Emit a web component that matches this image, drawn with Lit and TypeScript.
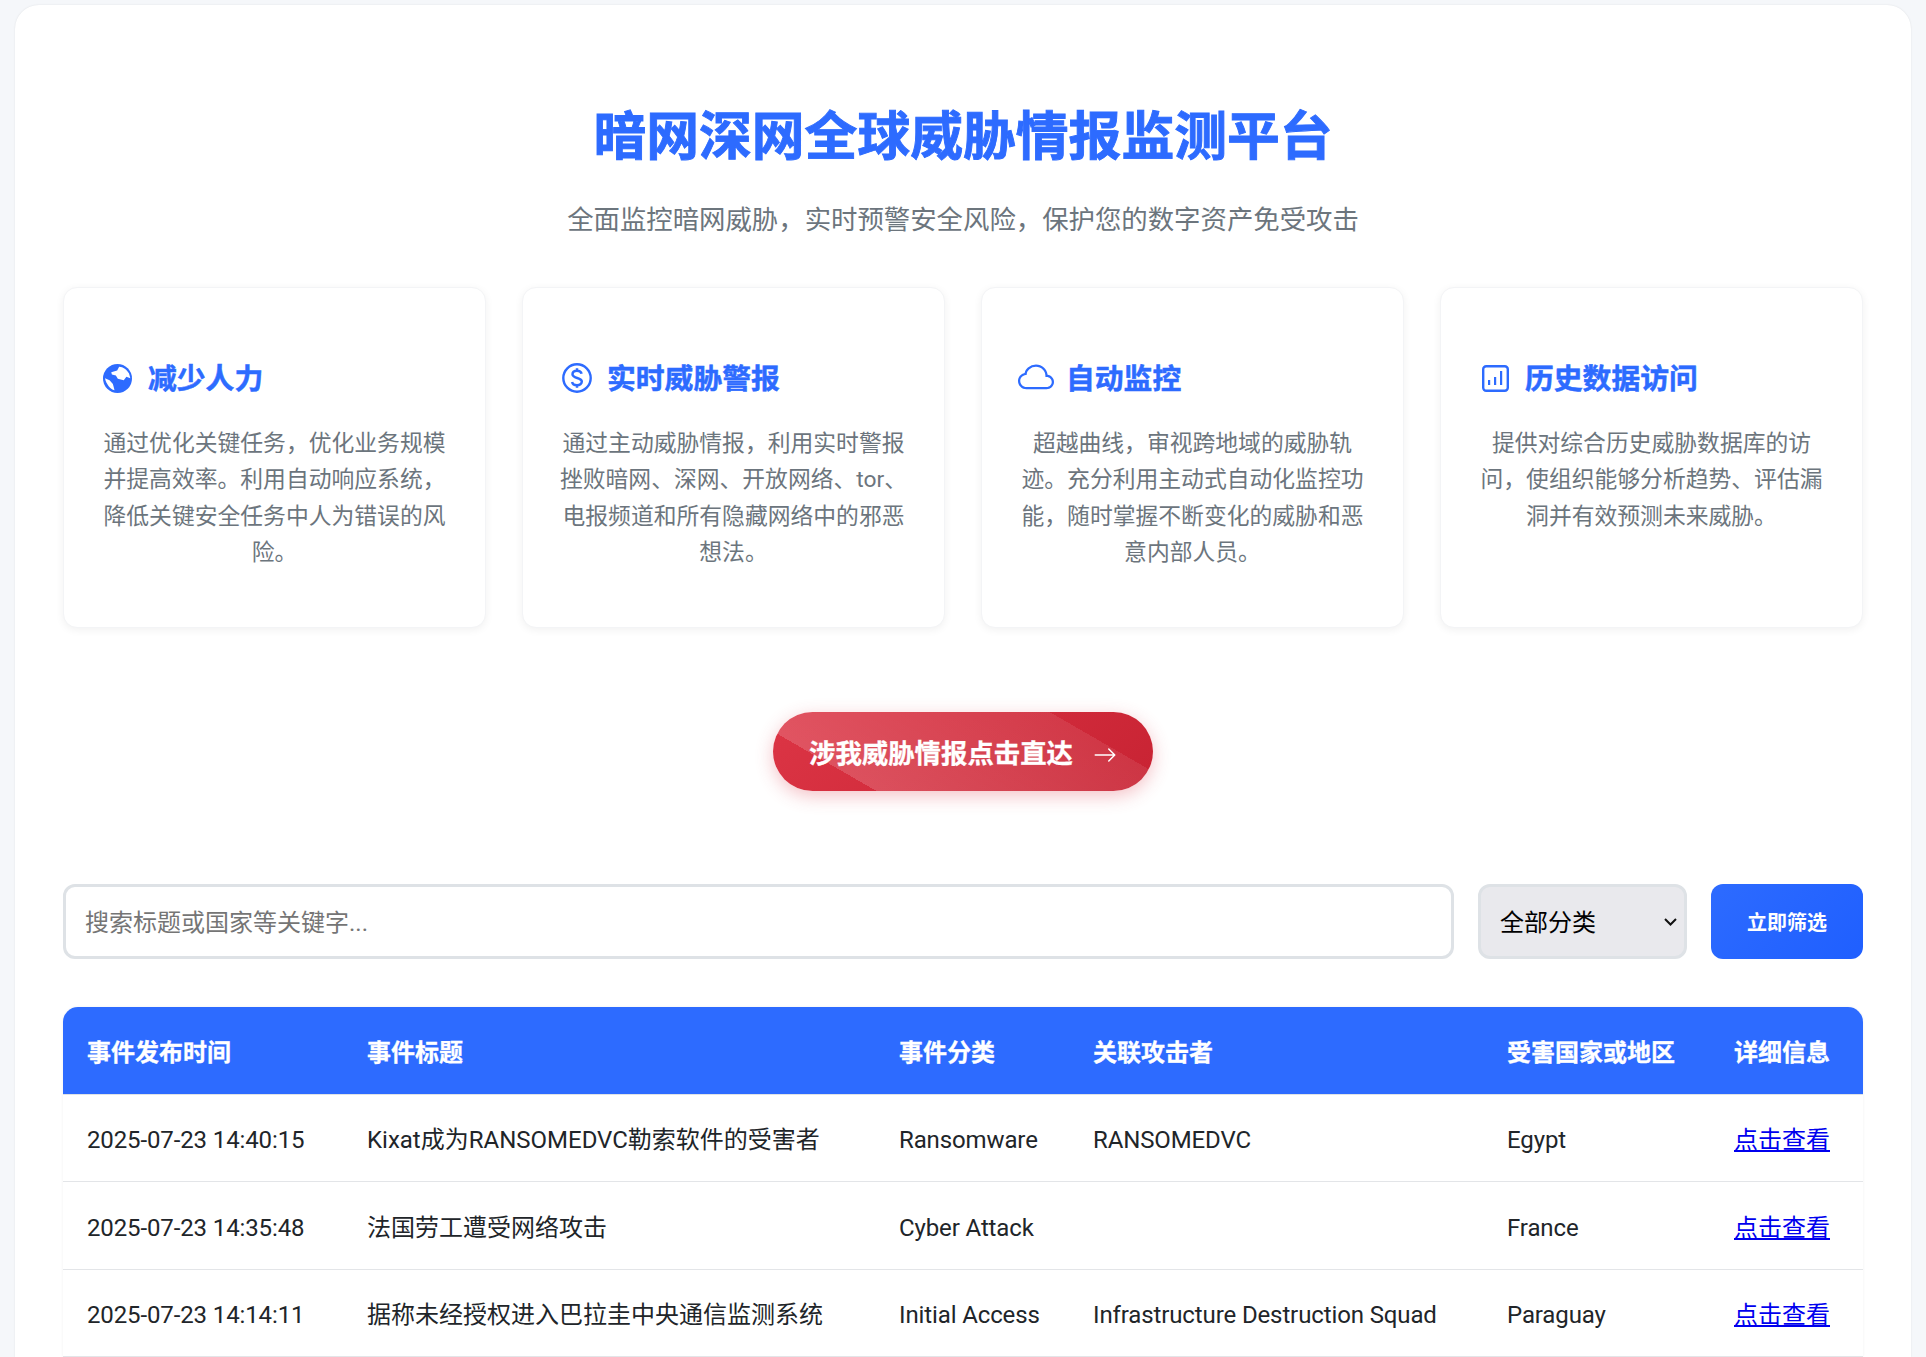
import { LitElement, html, css, svg } from "lit";
import { customElement } from "lit/decorators.js";

const features = [
  { key: "globe", title: "减少人力", text: "通过优化关键任务，优化业务规模并提高效率。利用自动响应系统，降低关键安全任务中人为错误的风险。" },
  { key: "dollar", title: "实时威胁警报", text: "通过主动威胁情报，利用实时警报挫败暗网、深网、开放网络、tor、电报频道和所有隐藏网络中的邪恶想法。" },
  { key: "cloud", title: "自动监控", text: "超越曲线，审视跨地域的威胁轨迹。充分利用主动式自动化监控功能，随时掌握不断变化的威胁和恶意内部人员。" },
  { key: "chart", title: "历史数据访问", text: "提供对综合历史威胁数据库的访问，使组织能够分析趋势、评估漏洞并有效预测未来威胁。" },
];

const rows = [
  ["2025-07-23 14:40:15", "Kixat成为RANSOMEDVC勒索软件的受害者", "Ransomware", "RANSOMEDVC", "Egypt"],
  ["2025-07-23 14:35:48", "法国劳工遭受网络攻击", "Cyber Attack", "", "France"],
  ["2025-07-23 14:14:11", "据称未经授权进入巴拉圭中央通信监测系统", "Initial Access", "Infrastructure Destruction Squad", "Paraguay"],
];

const icons: Record<string, unknown> = {
  globe: svg`<svg class="icon globe" viewBox="15 11 88 88"><circle cx="59" cy="55" r="44" fill="currentColor"/><path fill="#fff" d="M40 36 L58 31 L64 19 C76 19 88 28 94 40 L98 54 L86 50 L78 60 L60 56 L54 46 L42 43 Z"/><path fill="#fff" d="M21 54 L35 60 L45 72 L50 91 C36 87 25 72 21 54 Z"/></svg>`,
  dollar: svg`<svg class="icon dollar" viewBox="0 0 30 30" fill="none" stroke="currentColor"><circle cx="15" cy="15" r="13.7" stroke-width="2.4"/><path stroke-width="2.5" d="M19.6 10.8c-.5-1.9-2.2-3-4.6-3-2.6 0-4.5 1.4-4.5 3.5 0 4.7 9.3 2.6 9.3 7.3 0 2.1-2 3.6-4.8 3.6-2.7 0-4.5-1.2-4.9-3.2M15 5.2v2.6M15 22.2v2.6"/></svg>`,
  cloud: svg`<svg class="icon cloud" viewBox="0 0 16 16" fill="currentColor"><path d="M4.406 3.342A5.53 5.53 0 0 1 8 2c2.69 0 4.923 2 5.166 4.579C14.758 6.804 16 8.137 16 9.773 16 11.569 14.502 13 12.687 13H3.781C1.708 13 0 11.366 0 9.318c0-1.763 1.266-3.223 2.942-3.593.143-.863.698-1.723 1.464-2.383m.653.757c-.757.653-1.153 1.44-1.153 2.056v.448l-.445.049C2.064 6.805 1 7.952 1 9.318 1 10.785 2.23 12 3.781 12h8.906C13.98 12 15 10.988 15 9.773c0-1.216-1.02-2.228-2.313-2.228h-.5v-.5C12.188 4.825 10.328 3 8 3a4.53 4.53 0 0 0-2.941 1.1z"/></svg>`,
  chart: svg`<svg class="icon chart" viewBox="0 0 27 27" fill="currentColor"><rect x="1.2" y="1.2" width="24.6" height="24.6" rx="3" fill="none" stroke="currentColor" stroke-width="2.4"/><rect x="6" y="15" width="2.2" height="5"/><rect x="12" y="12" width="2.2" height="8"/><rect x="18" y="6" width="2.2" height="14"/></svg>`,
};

@customElement("app-root")
export class AppRoot extends LitElement {
  static styles = css`
    :host {
      display: block;
      height: 100vh;
      overflow: hidden;
      background: #f5f7fa;
      font-family: "Roboto", "Noto Sans CJK SC", sans-serif;
      color: #212529;
    }
    .container {
      margin: 5px 15px 0;
      padding: 96px 48px 0;
      background: #fff;
      border-radius: 24px 24px 0 0;
      box-shadow: 0 0 2px rgba(0, 0, 0, 0.1);
      min-height: 1352px;
      box-sizing: border-box;
    }
    h1 {
      margin: 0;
      font-size: 52.8px;
      line-height: 72px;
      font-weight: 700;
      text-align: center;
      color: #2d6bff;
      -webkit-text-stroke: 0.9px #2d6bff;
    }
    .sub {
      margin: 26px 0 0;
      font-size: 26.4px;
      line-height: 42px;
      text-align: center;
      color: #6c757d;
    }
    .cards {
      display: grid;
      grid-template-columns: repeat(4, 1fr);
      gap: 36px;
      margin-top: 46px;
    }
    .card {
      box-sizing: border-box;
      padding: 73px 39px 55px;
      border: 1px solid #f3f4f6;
      border-radius: 14px;
      box-shadow: 0 2px 8px rgba(0, 0, 0, 0.06);
      background: #fff;
    }
    .card-head {
      display: flex;
      align-items: center;
      height: 36px;
      color: #2d6bff;
    }
    .card-head h3 {
      margin: 0;
      font-size: 28.8px;
      line-height: 36px;
      font-weight: 700;
      -webkit-text-stroke: 0.5px #2d6bff;
    }
    .icon { flex: none; display: block; margin-top: -2px; }
    .globe { width: 29px; height: 29px; margin-right: 16px; }
    .dollar { width: 30px; height: 30px; margin-right: 15px; }
    .cloud { width: 36px; height: 36px; margin-left: -3px; margin-right: 12px; }
    .chart { width: 27px; height: 27px; margin-left: 2px; margin-right: 16px; }
    .card p {
      margin: 29px -6px 0;
      font-size: 22.8px;
      line-height: 36.48px;
      text-align: center;
      color: #6c757d;
    }
    .cta-row {
      display: flex;
      justify-content: center;
      margin-top: 84px;
    }
    .cta {
      display: inline-flex;
      align-items: center;
      height: 79px;
      box-sizing: border-box;
      padding: 0 38px 0 36px;
      gap: 22px;
      border: 0;
      border-radius: 40px;
      color: #fff;
      font: 700 26.4px "Roboto", "Noto Sans CJK SC", sans-serif;
      -webkit-text-stroke: 0.3px #fff;
      background:
        linear-gradient(30deg, transparent 20%, rgba(255, 255, 255, 0.16) 20%, rgba(255, 255, 255, 0.08) 80%, transparent 80%),
        linear-gradient(135deg, #dc3545, #c82333);
      box-shadow: 0 5px 18px rgba(220, 53, 69, 0.3);
    }
    .cta svg { width: 24px; height: 24px; margin: 7px -2px 0; }
    .filters {
      display: flex;
      gap: 24px;
      margin-top: 93px;
      height: 75px;
    }
    .search {
      flex: 1;
      min-width: 0;
      box-sizing: border-box;
      padding: 4px 19px 0;
      border: 3px solid #dee2e6;
      border-radius: 12px;
      font: 24px "Roboto", "Noto Sans CJK SC", sans-serif;
      background: #fff;
      outline: none;
    }
    .search::placeholder { color: #757575; opacity: 1; }
    .select-wrap {
      position: relative;
      width: 209px;
      flex: none;
    }
    .select {
      appearance: none;
      width: 100%;
      height: 100%;
      box-sizing: border-box;
      padding: 4px 19px 0;
      border: 3px solid #dee2e6;
      border-radius: 12px;
      background-color: #e9e9ed;
      color: #000;
      font: 24px "Roboto", "Noto Sans CJK SC", sans-serif;
    }
    .chev {
      position: absolute;
      right: 10px;
      top: 34px;
      width: 13px;
      height: 8px;
      pointer-events: none;
    }
    .go {
      width: 152px;
      flex: none;
      border: 0;
      border-radius: 12px;
      color: #fff;
      font: 700 20px "Roboto", "Noto Sans CJK SC", sans-serif;
      background: linear-gradient(135deg, #2d6bff, #1f5fff);
    }
    .table-wrap {
      margin-top: 48px;
      border-radius: 15px 15px 0 0;
      overflow: hidden;
      box-shadow: 0 0 3px rgba(0, 0, 0, 0.06);
    }
    table {
      width: 100%;
      table-layout: fixed;
      border-collapse: separate;
      border-spacing: 0;
      font-size: 24px;
      line-height: 30px;
    }
    .c1 { width: 280px; }
    .c2 { width: 532px; }
    .c3 { width: 194px; }
    .c4 { width: 414px; }
    .c5 { width: 227px; }
    .c6 { width: 153px; }
    th {
      height: 88px;
      box-sizing: border-box;
      padding: 5px 24px 0;
      text-align: left;
      font-weight: 700;
      color: #fff;
      background: #2d6bff;
      border-bottom: 1px solid #dee2e6;
      white-space: nowrap;
      -webkit-text-stroke: 0.3px #fff;
    }
    td {
      height: 87.5px;
      box-sizing: border-box;
      padding: 4px 24px 0;
      border-bottom: 1px solid #e3e5e8;
      white-space: nowrap;
      color: #212529;
    }
    td.latin { letter-spacing: -0.12px; }
    a { color: #0000ee; text-decoration: underline; }
  `;

  render() {
    return html`
      <div class="container">
        <h1>暗网深网全球威胁情报监测平台</h1>
        <p class="sub">全面监控暗网威胁，实时预警安全风险，保护您的数字资产免受攻击</p>
        <div class="cards">
          ${features.map(
            (f) => html`<div class="card">
              <div class="card-head">${icons[f.key]}<h3>${f.title}</h3></div>
              <p>${f.text}</p>
            </div>`
          )}
        </div>
        <div class="cta-row">
          <button class="cta">涉我威胁情报点击直达
            <svg viewBox="0 0 16 16" fill="currentColor"><path fill-rule="evenodd" d="M1 8a.5.5 0 0 1 .5-.5h11.793l-3.147-3.146a.5.5 0 0 1 .708-.708l4 4a.5.5 0 0 1 0 .708l-4 4a.5.5 0 0 1-.708-.708L13.293 8.5H1.5A.5.5 0 0 1 1 8"/></svg>
          </button>
        </div>
        <div class="filters">
          <input class="search" placeholder="搜索标题或国家等关键字..." />
          <div class="select-wrap">
            <select class="select"><option>全部分类</option></select>
            <svg class="chev" viewBox="0 0 13 8" fill="none" stroke="#111" stroke-width="2"><path d="M1 1l5.5 5.5L12 1"/></svg>
          </div>
          <button class="go">立即筛选</button>
        </div>
        <div class="table-wrap">
          <table>
            <colgroup>
              <col class="c1" /><col class="c2" /><col class="c3" /><col class="c4" /><col class="c5" /><col class="c6" />
            </colgroup>
            <thead>
              <tr><th>事件发布时间</th><th>事件标题</th><th>事件分类</th><th>关联攻击者</th><th>受害国家或地区</th><th>详细信息</th></tr>
            </thead>
            <tbody>
              ${rows.map(
                (r) => html`<tr>
                  ${r.map((c, i) => html`<td class=${i === 1 ? "" : "latin"}>${c}</td>`)}
                  <td><a href="#">点击查看</a></td>
                </tr>`
              )}
            </tbody>
          </table>
        </div>
      </div>
    `;
  }
}
